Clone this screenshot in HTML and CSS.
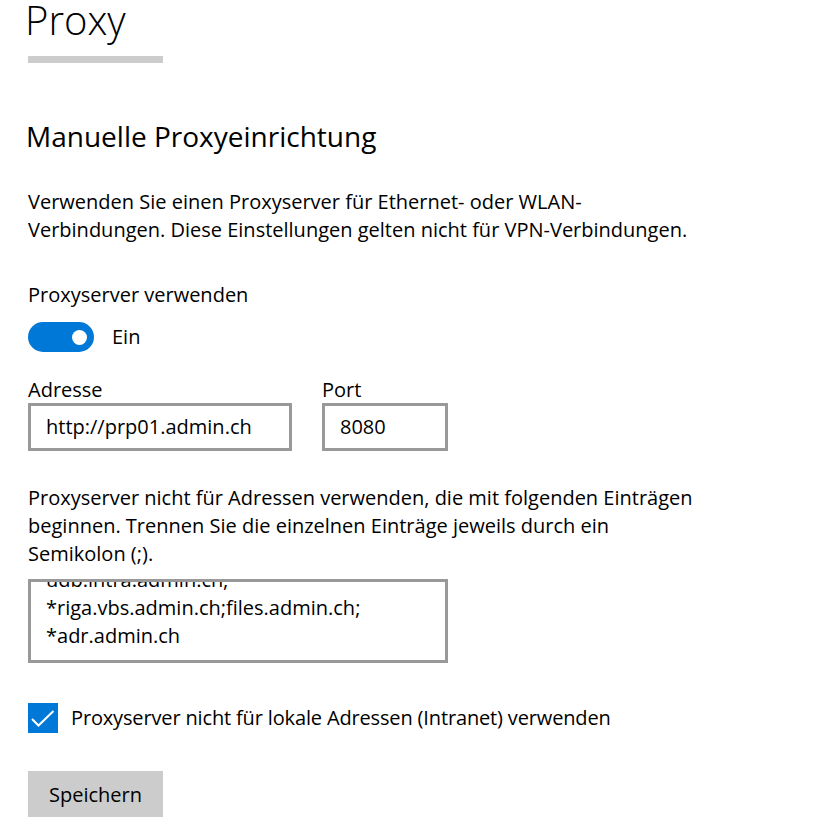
FILE: index.html
```html
<!DOCTYPE html>
<html lang="de">
<head>
<meta charset="utf-8">
<title>Proxy</title>
<link rel="stylesheet" href="styles.css">
</head>
<body>
<main class="page">
  <h1 class="title">Proxy</h1>
  <div class="title-bar"></div>

  <h2 class="section-title">Manuelle Proxyeinrichtung</h2>

  <p class="text intro">Verwenden Sie einen Proxyserver für Ethernet- oder WLAN-<br>Verbindungen. Diese Einstellungen gelten nicht für VPN-Verbindungen.</p>

  <div class="text label-use">Proxyserver verwenden</div>
  <div class="toggle-row">
    <span class="toggle"><span class="knob"></span></span>
    <span class="text">Ein</span>
  </div>

  <div class="fields">
    <div class="field">
      <div class="text field-label">Adresse</div>
      <div class="input input-address">http://prp01.admin.ch</div>
    </div>
    <div class="field">
      <div class="text field-label">Port</div>
      <div class="input input-port">8080</div>
    </div>
  </div>

  <p class="text exceptions">Proxyserver nicht für Adressen verwenden, die mit folgenden Einträgen<br>beginnen. Trennen Sie die einzelnen Einträge jeweils durch ein<br>Semikolon (;).</p>

  <div class="textarea">
    <div class="textarea-content">udb.intra.admin.ch;<br>*riga.vbs.admin.ch;files.admin.ch;<br>*adr.admin.ch</div>
  </div>

  <div class="check-row">
    <span class="checkbox">
      <svg width="30" height="30" viewBox="0 0 30 30"><polyline points="4,16 10.5,22.5 25.5,8" fill="none" stroke="#fff" stroke-width="2"/></svg>
    </span>
    <span class="text check-label">Proxyserver nicht für lokale Adressen (Intranet) verwenden</span>
  </div>

  <button class="save-btn" type="button">Speichern</button>
</main>
</body>
</html>
```

FILE: styles.css
```css
html, body {
  margin: 0;
  padding: 0;
  background: #fff;
}

body {
  font-family: "Open Sans", "Noto Sans", sans-serif;
  color: #000;
}

.page {
  padding-left: 28px;
  display: flex;
  flex-direction: column;
  align-items: flex-start;
}

.title {
  margin: 0 0 16px -3px;
  font-size: 40px;
  font-weight: 300;
  line-height: 40px;
}

.title-bar {
  width: 135px;
  height: 7px;
  background: #cccccc;
}

.section-title {
  margin: 55px 0 0 -2px;
  font-size: 28px;
  font-weight: 400;
  line-height: 36px;
}

.text {
  font-size: 20px;
  line-height: 28px;
}

.intro {
  margin: 34px 0 0 0;
}

.label-use {
  margin-top: 37px;
}

.toggle-row {
  margin-top: 13px;
  display: flex;
  align-items: center;
  gap: 18px;
}

.toggle {
  width: 66px;
  height: 30px;
  border-radius: 15px;
  background: #0078d7;
  display: flex;
  align-items: center;
  justify-content: flex-end;
  padding-right: 7px;
  box-sizing: border-box;
}

.knob {
  width: 15px;
  height: 15px;
  border-radius: 50%;
  background: #fff;
}

.fields {
  margin-top: 25px;
  display: flex;
  gap: 30px;
}

.field-label {
  line-height: 26px;
}

.input {
  box-sizing: border-box;
  height: 48px;
  border: 3px solid #999999;
  padding: 0 15px;
  font-size: 20px;
  line-height: 42px;
  display: flex;
  align-items: center;
}

.input-address {
  width: 264px;
}

.input-port {
  width: 126px;
}

.exceptions {
  margin: 33px 0 0 0;
}

.textarea {
  margin-top: 11px;
  box-sizing: border-box;
  width: 420px;
  height: 84px;
  border: 3px solid #999999;
  overflow: hidden;
  padding: 0 15px;
}

.textarea-content {
  font-size: 20px;
  line-height: 28px;
  margin-top: -16px;
}

.check-row {
  margin-top: 40px;
  display: flex;
  align-items: center;
  gap: 13px;
}

.check-label {
  letter-spacing: -0.15px;
}

.checkbox {
  width: 30px;
  height: 30px;
  background: #0078d7;
  display: block;
}

.checkbox svg {
  display: block;
}

.save-btn {
  margin-top: 38px;
  width: 135px;
  height: 46px;
  border: none;
  background: #cccccc;
  font-family: inherit;
  font-size: 20px;
  color: #000;
  padding: 0;
}
```
